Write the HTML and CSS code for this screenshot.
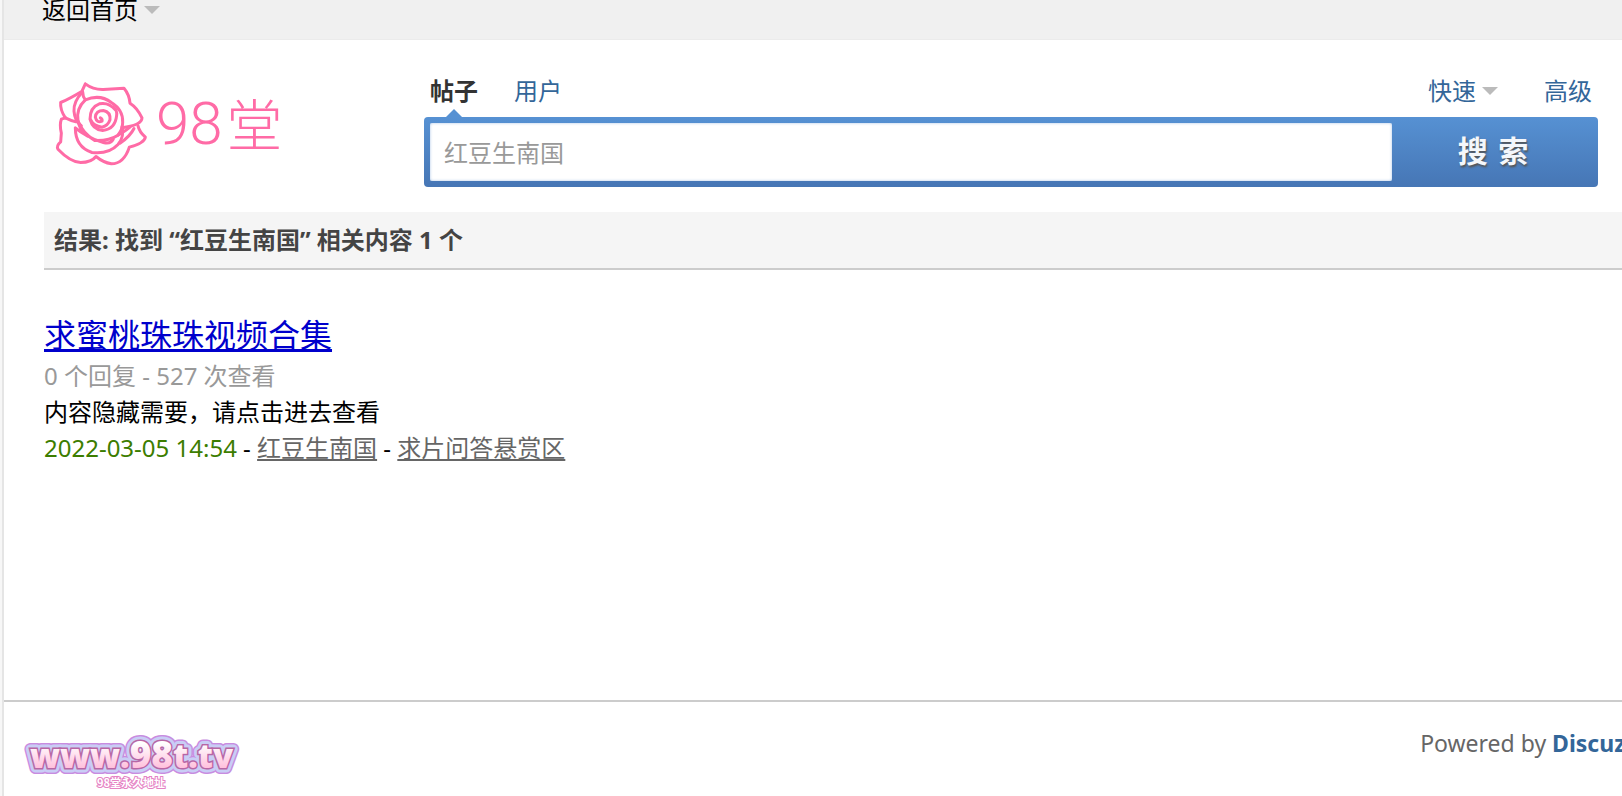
FILE: index.html
```html
<!DOCTYPE html>
<html lang="zh-CN">
<head>
    <meta charset="UTF-8">
    <title>搜索</title>
    <link rel="stylesheet" href="styles.css">
</head>
<body>
<div class="toptb">
    <a href="#" class="showmenu">返回首页</a>
</div>

<div class="header">
    <a href="#" class="logo">
        <svg class="rose" viewBox="0 0 300 285">
            <path d="M106 28 L96 50 Q60 72 32 84 Q30 106 46 130 M106 28 Q130 46 160 45 L222 41 Q238 60 240 86 Q262 100 276 130 Q276 152 216 160"/>
            <path d="M46 130 L34 134 Q28 150 34 176 L32 202 Q18 214 24 224 Q60 262 92 264 Q124 264 138 246 Q160 264 184 268 Q222 268 238 218 Q284 206 286 188 Q268 172 264 154"/>
            <path d="M98 52 Q98 66 106 76 Q78 102 84 138 Q90 172 112 184 Q92 174 76 160 Q76 218 126 234 Q176 240 204 210 Q224 186 216 156"/>
            <path d="M96 54 Q70 82 72 110 Q74 140 94 154 M46 130 Q62 138 78 142"/>
            <path d="M106 76 Q150 58 184 84 Q220 106 218 144 Q218 164 204 182"/>
            <path d="M196 106 Q176 82 148 88 Q120 98 120 134 Q128 166 158 168 Q196 164 200 122 Q202 108 190 98"/>
            <path d="M151 130 Q158 134 156 140 Q140 146 136 128 Q138 108 160 108 Q182 112 180 136 Q174 154 156 158 Q130 154 122 136"/>
            <path d="M84 140 Q98 176 134 198 Q176 200 204 182 Q226 170 240 158 M112 184 Q134 198 160 204 Q182 210 190 194 M210 206 Q240 186 252 162"/>
        </svg>
        <span class="num">98</span><span class="name">堂</span>
    </a>

    <form class="search" onsubmit="return false">
        <div class="tabs">
            <a href="#" class="on">帖子</a>
            <a href="#">用户</a>
            <a href="#" class="quick showmenu">快速</a>
            <a href="#">高级</a>
        </div>
        <div class="bar">
            <input type="text" class="txt" aria-label="搜索内容" value="红豆生南国">
            <button type="submit" class="btn">搜 索</button>
        </div>
    </form>
</div>

<div class="main">
    <h2 class="result">结果: 找到 “红豆生南国” 相关内容 1 个</h2>
    <ul class="list">
        <li>
            <h3><a href="#">求蜜桃珠珠视频合集</a></h3>
            <p class="count">0 个回复 - 527 次查看</p>
            <p>内容隐藏需要，请点击进去查看</p>
            <p><span class="time">2022-03-05 14:54</span> - <a href="#">红豆生南国</a> - <a href="#">求片问答悬赏区</a></p>
        </li>
    </ul>
</div>

<div class="footer">
    <a href="#" class="site">
        <svg width="226" height="64" viewBox="0 0 226 64">
            <defs>
                <linearGradient id="pink" x1="0" y1="0" x2="0" y2="1">
                    <stop offset="0.3" stop-color="#ffffff"/>
                    <stop offset="0.9" stop-color="#ffb0d4"/>
                </linearGradient>
            </defs>
            <use href="#url" class="edge"/>
            <use href="#url" class="glow"/>
            <use href="#url" class="dark"/>
            <g fill="url(#pink)">
                <text id="url" y="40"><tspan x="10" class="small">www.</tspan><tspan class="big">98</tspan><tspan class="small">t.tv</tspan></text>
            </g>
            <text x="77" y="59" class="sub">98堂永久地址</text>
        </svg>
    </a>
    <p class="power">Powered by <a href="#">Discuz!</a></p>
</div>
</body>
</html>
```

FILE: styles.css
```css
body, h2, h3, p, ul, form {
    margin: 0;
    padding: 0;
}

* {
    box-sizing: border-box;
}

html {
    border-left: 2px solid #f7f7f7;
    background: #fff;
}

body {
    display: flex;
    flex-direction: column;
    min-height: 100vh;
    border-left: 2px solid #e5e5e5;
    font: 24px/36px "Noto Sans", "Noto Sans CJK SC", sans-serif;
    color: #000;
    overflow-x: hidden;
}

li {
    list-style: none;
}

a {
    color: #369;
    text-decoration: none;
}

.toptb {
    height: 40px;
    padding-left: 38px;
    border-bottom: 1px solid #ebebeb;
    background: #f0f0f0;
    line-height: 20px;
}

.toptb a {
    color: #000;
}

.showmenu:after {
    content: "";
    display: inline-block;
    margin-left: 6px;
    border: 8px solid transparent;
    border-top-color: #bbb;
    border-bottom: 0;
    vertical-align: 5px;
}

/* 搜索区 */
.header {
    display: flex;
    padding: 34px 24px 0 46px;
}

.logo {
    display: flex;
    width: 374px;
    height: 100px;
    color: #ff6ba6;
}

.rose {
    width: 100px;
    height: 96px;
    fill: none;
    stroke: #ff6ba6;
    stroke-width: 9;
    stroke-linejoin: round;
    stroke-linecap: round;
}

.num {
    margin-left: 6px;
    font: 300 60px/100px Roboto, sans-serif;
}

.name {
    margin-left: 4px;
    font: 300 56px/96px "Noto Sans CJK SC", sans-serif;
}

.search {
    flex: 1;
}

.tabs {
    display: flex;
    height: 43px;
    padding: 0 6px;
    gap: 36px;
    line-height: 34px;
}

.tabs a {
    position: relative;
}

.tabs .on {
    color: #333;
    font-weight: bold;
}

.tabs .on:after {
    content: "";
    position: absolute;
    left: 16px;
    bottom: 0;
    border: 8px solid transparent;
    border-bottom-color: #5691d3;
    border-top: 0;
}

.tabs .quick {
    margin-left: auto;
    margin-right: 10px;
}

.bar {
    display: flex;
    height: 70px;
    padding: 6px 0 6px 6px;
    border-radius: 4px;
    background: linear-gradient(#5691d3, #4676b5);
}

.txt {
    flex: 1;
    min-width: 0;
    padding: 2px 14px 0;
    border: 0;
    border-radius: 2px;
    outline: none;
    background: #fff;
    box-shadow: inset 0 0 3px #a9c4e6;
    font: inherit;
    color: #999;
}

.btn {
    width: 206px;
    padding: 0 4px 0 0;
    border: 0;
    background: none;
    color: #f4f7fb;
    font: bold 30px/56px "DejaVu Sans", "Noto Sans CJK SC", sans-serif;
    text-shadow: 1px 2px 2px #555;
    cursor: pointer;
}

/* 搜索结果 */
.main {
    flex: 1;
    padding: 25px 0 0 40px;
}

.result {
    height: 58px;
    padding-left: 10px;
    border-bottom: 2px solid #ccc;
    background: #f5f5f5;
    color: #444;
    font-size: 24px;
    line-height: 56px;
}

.list {
    padding: 42px 0;
}

.list h3 {
    height: 46px;
    font-size: 32px;
    font-weight: normal;
    line-height: 46px;
}

.list h3 a {
    color: #00c;
    text-decoration: underline;
}

.list p a {
    color: #666;
    text-decoration: underline;
}

.list .count {
    color: #999;
}

.list .time {
    color: #3c7d00;
}

/* 底部 */
.footer {
    display: flex;
    justify-content: space-between;
    height: 96px;
    border-top: 2px solid #ccc;
    color: #666;
}

.site {
    height: 64px;
    margin: 26px 0 0 16px;
}

.site text {
    font-family: "Open Sans", sans-serif;
    font-weight: 800;
}

.site .small {
    font-size: 33px;
}

.site .big {
    font-size: 37px;
}

.site .edge {
    fill: #c88ce0;
    stroke: #c88ce0;
    stroke-width: 12px;
    stroke-linejoin: round;
}

.site .glow {
    fill: #c9cdf5;
    stroke: #c9cdf5;
    stroke-width: 9px;
    stroke-linejoin: round;
}

.site .dark {
    fill: #9a4f92;
    stroke: #b766a5;
    stroke-width: 3px;
}

.site .sub {
    fill: #fff;
    stroke: #e582c4;
    stroke-width: 2px;
    paint-order: stroke;
    font: bold 11px "Noto Sans CJK SC", sans-serif;
}

.power {
    margin: 23px -10px 0 0;
    font-size: 23px;
    white-space: nowrap;
}

.power a {
    font-weight: bold;
}
```
